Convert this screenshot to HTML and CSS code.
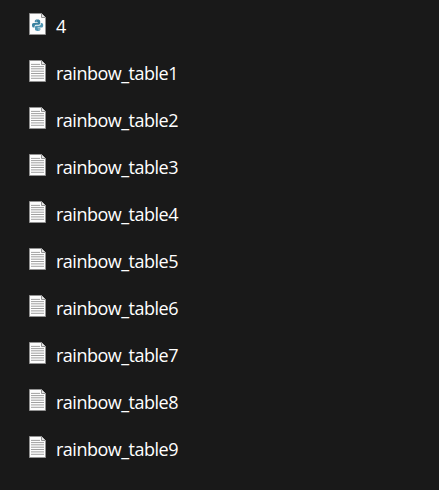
FILE: index.html
```html
<!DOCTYPE html>
<html lang="en">
<head>
    <meta charset="UTF-8">
    <meta name="viewport" content="width=device-width, initial-scale=1.0">
    <title>Files</title>
    <link rel="stylesheet" href="styles.css">
</head>
<body>
    <!-- Shared file icons -->
    <svg class="icon-defs" width="0" height="0">
        <symbol id="page" viewBox="0 0 17 22">
            <path d="M0.5 0.5H12.5L16.5 4.5V21.5H0.5Z" fill="#fdfdfd" stroke="#929292"/>
            <path d="M12.5 0.5V4.5H16.5" fill="#e6e6e6" stroke="#929292"/>
        </symbol>
        <symbol id="text-file" viewBox="0 0 17 22">
            <use href="#page" width="17" height="22"/>
            <path d="M2 4.4H11M2 6.6H15M2 8.8H15M2 11.2H15M2 13.5H15M2 15.9H15M2 18.3H15" stroke="#a0a0a0" fill="none"/>
        </symbol>
        <symbol id="python-file" viewBox="0 0 17 22">
            <use href="#page" width="17" height="22"/>
            <path d="M8.4 6.5C6.5 6.5 5.8 7.1 5.8 8.2V9.3H8.7V9.9H4.7C3.5 9.9 3 10.8 3 12.2S3.6 14.5 4.7 14.5H5.6V13.3C5.6 12.2 6.3 11.7 7.4 11.7H9.8C10.7 11.7 11.2 11.1 11.2 10.3V8.2C11.2 7 10.2 6.5 8.4 6.5Z" fill="#39819f"/>
            <path d="M8.8 18C10.6 18 11.4 17.4 11.4 16.3V15.2H8.6V14.6H12.4C13.6 14.6 14.2 13.7 14.2 12.3S13.5 10 12.4 10H11.8V11C11.8 12.1 11 12.7 10 12.7H7.4C6.5 12.7 6 13.3 6 14.1V16.3C6 17.5 7 18 8.8 18Z" fill="#4f96b3"/>
            <circle cx="7.2" cy="8" r="0.5" fill="#cfe2ea"/>
            <circle cx="10" cy="16.5" r="0.5" fill="#cfe2ea"/>
        </symbol>
    </svg>

    <ul class="file-list">
        <li class="file"><svg class="file-icon"><use href="#python-file"/></svg><span class="file-name">4</span></li>
        <li class="file"><svg class="file-icon"><use href="#text-file"/></svg><span class="file-name">rainbow_table1</span></li>
        <li class="file"><svg class="file-icon"><use href="#text-file"/></svg><span class="file-name">rainbow_table2</span></li>
        <li class="file"><svg class="file-icon"><use href="#text-file"/></svg><span class="file-name">rainbow_table3</span></li>
        <li class="file"><svg class="file-icon"><use href="#text-file"/></svg><span class="file-name">rainbow_table4</span></li>
        <li class="file"><svg class="file-icon"><use href="#text-file"/></svg><span class="file-name">rainbow_table5</span></li>
        <li class="file"><svg class="file-icon"><use href="#text-file"/></svg><span class="file-name">rainbow_table6</span></li>
        <li class="file"><svg class="file-icon"><use href="#text-file"/></svg><span class="file-name">rainbow_table7</span></li>
        <li class="file"><svg class="file-icon"><use href="#text-file"/></svg><span class="file-name">rainbow_table8</span></li>
        <li class="file"><svg class="file-icon"><use href="#text-file"/></svg><span class="file-name">rainbow_table9</span></li>
    </ul>
</body>
</html>
```
FILE: styles.css
```css
body {
    margin: 0;
    background-color: #191919;
    color: #fff;
    font-family: "Segoe UI", "Open Sans", sans-serif;
}

.icon-defs {
    display: block;
}

.file-list {
    list-style: none;
    margin: 0;
    padding: 2px 0 0 29px;
}

.file {
    display: flex;
    align-items: flex-start;
    height: 36px;
    padding-top: 11px;
}

.file-icon {
    width: 17px;
    height: 22px;
    margin-right: 10px;
}

.file-name {
    font-size: 18px;
    line-height: 26px;
    letter-spacing: -0.5px;
}
```
